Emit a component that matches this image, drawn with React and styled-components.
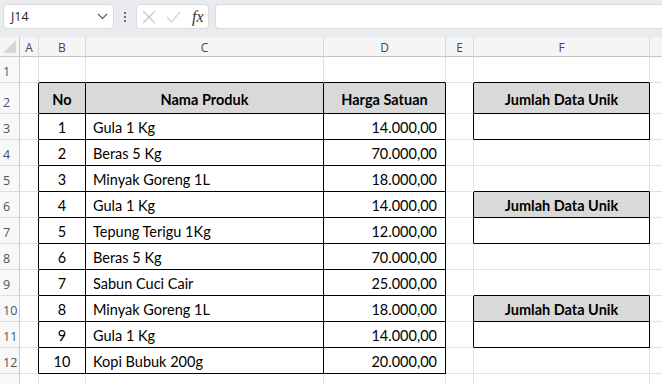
import React from "react";
import styled, { createGlobalStyle } from "styled-components";

const GlobalStyle = createGlobalStyle`
  html, body {
    margin: 0;
    padding: 0;
    background: #fff;
    overflow: hidden;
  }
  * {
    box-sizing: border-box;
  }
`;

const GRID = "#e1e1e1";
const INK = "#000";

const Page = styled.div`
  width: 662px;
  height: 384px;
  overflow: hidden;
  display: flex;
  flex-direction: column;
  font-family: "Lato", "Liberation Sans", sans-serif;
`;

const FormulaBar = styled.div`
  height: 37px;
  flex: none;
  background: #e9ebee;
  display: flex;
  align-items: flex-start;
  padding: 4px 0 0 3px;
`;

const NameBox = styled.div`
  width: 111px;
  height: 25px;
  background: #fff;
  border: 1px solid #d9dbde;
  border-radius: 4px;
  display: flex;
  align-items: center;
  justify-content: space-between;
  padding: 0 5px 0 7px;
  font-family: "Open Sans", "Noto Sans", sans-serif;
  font-size: 12.5px;
  color: #1f1f1f;
`;

const Dots = styled.div`
  width: 22px;
  height: 25px;
  display: flex;
  flex-direction: column;
  align-items: center;
  justify-content: center;
  gap: 2px;

  span {
    width: 2px;
    height: 2px;
    background: #444;
    border-radius: 1px;
  }
`;

const FxBox = styled.div`
  width: 73px;
  height: 25px;
  background: #fff;
  border: 1px solid #d9dbde;
  border-radius: 4px;
  display: flex;
  align-items: center;
  padding: 0 4px 0 5px;
  gap: 10px;
`;

const FxLabel = styled.span`
  font-family: "Liberation Serif", "DejaVu Serif", serif;
  font-style: italic;
  font-size: 16px;
  color: #333;
  margin-left: 1px;
`;

const FormulaInput = styled.div`
  flex: 1;
  height: 25px;
  margin-left: 6px;
  background: #fff;
  border: 1px solid #d9dbde;
  border-right: none;
  border-radius: 4px 0 0 4px;
`;

const Sheet = styled.div`
  flex: 1;
  display: grid;
  grid-template-columns: 20px 19px 47px 238px 122px 28px 176px 1fr;
  grid-template-rows: 20px 26px 31px repeat(11, 26px);
  overflow: hidden;
`;

const Corner = styled.div`
  background: #f5f5f5;
  border-right: 1px solid #c9c9c9;
  border-bottom: 1px solid #c9c9c9;
  position: relative;

  &::after {
    content: "";
    position: absolute;
    right: 3px;
    bottom: 3px;
    width: 0;
    height: 0;
    border-left: 13px solid transparent;
    border-bottom: 13px solid #d6d6d6;
  }
`;

const ColHead = styled.div`
  background: #f5f5f5;
  border-right: 1px solid #dadada;
  border-bottom: 1px solid #c4c4c4;
  display: flex;
  align-items: center;
  justify-content: center;
  padding-top: 1px;
  font-family: "Open Sans", "Noto Sans", sans-serif;
  font-size: 12px;
  color: #3d4a5c;
`;

const RowHead = styled.div`
  background: #f8f8f8;
  border-right: 1px solid #c9c9c9;
  border-bottom: 1px solid #dcdcdc;
  display: flex;
  align-items: flex-end;
  padding: 0 0 3px 3px;
  font-family: "Open Sans", "Noto Sans", sans-serif;
  font-size: 12.5px;
  line-height: 14px;
  color: #4a5566;
`;

const Cell = styled.div`
  background: ${(p) => (p.$fill ? "#d9d9d9" : "#fff")};
  border-right: 1px solid ${(p) => (p.$inkRight ? INK : GRID)};
  border-bottom: 1px solid ${(p) => (p.$inkBottom ? INK : GRID)};
  display: flex;
  align-items: center;
  justify-content: ${(p) =>
    p.$align === "right" ? "flex-end" : p.$align === "center" ? "center" : "flex-start"};
  padding: 2px ${(p) => (p.$align === "right" ? "8px" : "7px")} 0 7px;
  font-size: 14.5px;
  font-weight: ${(p) => (p.$bold ? 700 : 400)};
  color: #000;
  white-space: nowrap;
`;

const COLS = ["A", "B", "C", "D", "E", "F", "G"];

const products = [
  ["Gula 1 Kg", "14.000,00"],
  ["Beras 5 Kg", "70.000,00"],
  ["Minyak Goreng 1L", "18.000,00"],
  ["Gula 1 Kg", "14.000,00"],
  ["Tepung Terigu 1Kg", "12.000,00"],
  ["Beras 5 Kg", "70.000,00"],
  ["Sabun Cuci Cair", "25.000,00"],
  ["Minyak Goreng 1L", "18.000,00"],
  ["Gula 1 Kg", "14.000,00"],
  ["Kopi Bubuk 200g", "20.000,00"],
];

const uniqueBoxes = [2, 6, 10];

// c: 1 = A ... 7 = G
const boxed = (r, c) => {
  if (r >= 2 && r <= 12 && c >= 2 && c <= 4) return true;
  if (c === 6 && uniqueBoxes.some((h) => r === h || r === h + 1)) return true;
  return false;
};

const cellContent = (r, c) => {
  if (r === 2) {
    if (c === 2) return { text: "No", head: true };
    if (c === 3) return { text: "Nama Produk", head: true };
    if (c === 4) return { text: "Harga Satuan", head: true };
  }
  if (c === 6 && uniqueBoxes.includes(r)) return { text: "Jumlah Data Unik", head: true };
  if (r >= 3 && r <= 12) {
    const [name, price] = products[r - 3];
    if (c === 2) return { text: String(r - 2), align: "center" };
    if (c === 3) return { text: name, align: "left" };
    if (c === 4) return { text: price, align: "right" };
  }
  return null;
};

const Chevron = () => (
  <svg width="11" height="7" viewBox="0 0 11 7" fill="none">
    <path d="M1 1l4.5 4.5L10 1" stroke="#555" strokeWidth="1.1" />
  </svg>
);

const CancelIcon = () => (
  <svg width="14" height="14" viewBox="0 0 14 14" fill="none">
    <path d="M1 1l12 12M13 1L1 13" stroke="#c4c4c4" strokeWidth="1.1" />
  </svg>
);

const EnterIcon = () => (
  <svg width="15" height="12" viewBox="0 0 15 12" fill="none">
    <path d="M1 6l4.5 5L14 1" stroke="#c4c4c4" strokeWidth="1.1" />
  </svg>
);

const App = () => {
  // row 13 is only a sliver at the bottom edge, so its label stays hidden
  const rowNums = Array.from({ length: 13 }, (_, i) => i + 1);

  return (
    <Page>
      <GlobalStyle />
      <FormulaBar>
        <NameBox>
          <span>J14</span>
          <Chevron />
        </NameBox>
        <Dots>
          <span />
          <span />
          <span />
        </Dots>
        <FxBox>
          <CancelIcon />
          <EnterIcon />
          <FxLabel>fx</FxLabel>
        </FxBox>
        <FormulaInput />
      </FormulaBar>

      <Sheet>
        <Corner />
        {COLS.map((col) => (
          // column G runs off the right edge, its letter is out of view
          <ColHead key={col}>{col === "G" ? "" : col}</ColHead>
        ))}

        {rowNums.map((r) => (
          <React.Fragment key={r}>
            <RowHead>{r <= 12 ? r : ""}</RowHead>
            {COLS.map((col, i) => {
              const c = i + 1;
              const content = cellContent(r, c);
              return (
                <Cell
                  key={col}
                  $inkRight={boxed(r, c) || boxed(r, c + 1)}
                  $inkBottom={boxed(r, c) || boxed(r + 1, c)}
                  $fill={content?.head}
                  $bold={content?.head}
                  $align={content?.head ? "center" : content?.align}
                >
                  {content?.text}
                </Cell>
              );
            })}
          </React.Fragment>
        ))}
      </Sheet>
    </Page>
  );
};

export default App;
